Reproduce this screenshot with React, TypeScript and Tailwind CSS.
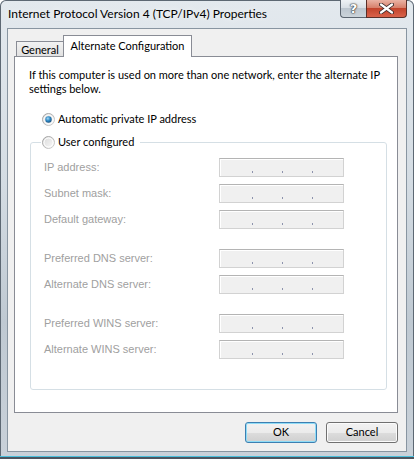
import type { ReactNode } from "react";

// Vista-style "TCP/IPv4 Properties" dialog, Alternate Configuration tab.
const title = "font-['Lato','Noto_Sans',sans-serif] text-[12px] whitespace-nowrap";
const ui = "font-['Lato','Noto_Sans',sans-serif] text-[11px] whitespace-nowrap";
const dlg = "font-['Liberation_Sans','DejaVu_Sans',sans-serif] text-[11px] whitespace-nowrap";

function Radio({ checked }: { checked?: boolean }) {
  return (
    <svg width="13" height="13" viewBox="0 0 13 13" className="shrink-0">
      <defs>
        <linearGradient id="rimg" x1="0" y1="0" x2="1" y2="1">
          <stop offset="0" stopColor="#9a9a9a" />
          <stop offset="1" stopColor="#d4d4d4" />
        </linearGradient>
        <radialGradient id="dot" cx="0.4" cy="0.35" r="0.7">
          <stop offset="0" stopColor="#a7d8f5" />
          <stop offset="0.5" stopColor="#2e8ac6" />
          <stop offset="1" stopColor="#1b4f7c" />
        </radialGradient>
        <linearGradient id="face" x1="0" y1="0" x2="1" y2="1">
          <stop offset="0" stopColor="#d8d8d8" />
          <stop offset="1" stopColor="#fbfbfb" />
        </linearGradient>
      </defs>
      <circle cx="6.5" cy="6.5" r="6" fill="url(#face)" stroke="url(#rimg)" />
      <circle cx="6.5" cy="6.5" r="4.5" fill="none" stroke="#ffffff" strokeWidth="1" />
      {checked && <circle cx="6.5" cy="6.5" r="3.2" fill="url(#dot)" />}
    </svg>
  );
}

function IpField() {
  return (
    <div className="relative h-[19px] w-[125px] border border-[#d2d2d2] border-t-[#b4b4b4] bg-[#f0f0f0] shadow-[inset_1px_1px_0_#ffffff]">
      <span className="absolute left-[32px] top-[12px] h-[2px] w-px bg-[#8d93ad]" />
      <span className="absolute left-[62px] top-[12px] h-[2px] w-px bg-[#8d93ad]" />
      <span className="absolute left-[92px] top-[12px] h-[2px] w-px bg-[#8d93ad]" />
    </div>
  );
}

function Row({ label }: { label: string }) {
  return (
    <div className="flex h-[19px] items-center">
      <span className={`${dlg} w-[175px] text-[#a0a0a0]`}>{label}</span>
      <IpField />
    </div>
  );
}

function Button({ children, primary }: { children: ReactNode; primary?: boolean }) {
  return (
    <div
      className={`${ui} flex h-[21px] w-[72px] items-center justify-center rounded-[3px] border text-black ${
        primary
          ? "border-[#3c7fb1] shadow-[inset_0_0_0_1px_#8fdcf7]"
          : "border-[#707070] shadow-[inset_0_0_0_1px_#fbfbfb]"
      } bg-[linear-gradient(#f2f2f2_0%,#ebebeb_50%,#dddddd_50%,#cfcfcf_100%)]`}
    >
      {children}
    </div>
  );
}

export default function App() {
  return (
    <div className="flex h-[459px] w-[414px] flex-col overflow-hidden rounded-t-[6px] bg-[linear-gradient(#e3e9ee,#d4dce3_40%,#bfc9d2_70%,#c9d1d9)] shadow-[inset_0_0_0_1px_#5d6873]">
      {/* title bar */}
      <div className="flex h-[28px] shrink-0 items-start">
        <div className={`${title} pl-[8px] pt-[6px] leading-[16px] text-black [text-shadow:0_0_6px_#ffffff]`}>
          Internet Protocol Version 4 (TCP/IPv4) Properties
        </div>
        <div className="ml-auto mr-[7px] flex h-[18px]">
          <div className="flex w-[26px] items-center justify-center rounded-bl-[4px] border border-t-0 border-r-0 border-[#5b6570] bg-[linear-gradient(#eef2f5,#d9e0e6_45%,#bcc6cf_50%,#cbd3da)]">
            <span className="font-['DejaVu_Sans',sans-serif] text-[13px] font-bold leading-none text-white [text-shadow:0_0_1px_#333,0_0_1px_#333,0_0_2px_#333]">
              ?
            </span>
          </div>
          <div className="flex w-[41px] items-center justify-center rounded-br-[4px] border border-t-0 border-[#5a2f28] bg-[linear-gradient(#eab3a4,#d7806b_45%,#c2442c_50%,#d9624a)]">
            <svg width="15" height="11" viewBox="0 0 15 11">
              <path d="M2 1.5 L13 9.5 M13 1.5 L2 9.5" stroke="#3b2a2a" strokeWidth="4" strokeLinecap="round" />
              <path d="M2 1.5 L13 9.5 M13 1.5 L2 9.5" stroke="#ffffff" strokeWidth="2.2" strokeLinecap="round" />
            </svg>
          </div>
        </div>
      </div>

      {/* client area */}
      <div className="mx-[7px] h-[424px] shrink-0 border border-[#8895a1] bg-[#f0f0f0] pl-[6px] pt-[6px]">
        <div className="w-[384px]">
          <div className="flex h-[21px] items-end pl-[2px]">
            <div className={`${ui} flex h-[15px] w-[47px] items-center justify-center border-l border-t border-[#898c95] bg-[linear-gradient(#f2f2f2,#e1e1e1)] pt-[2px] leading-[14px] text-black`}>
              General
            </div>
            <div className={`${ui} relative z-10 -mb-px flex h-[22px] w-[129px] items-start justify-center border-l border-r border-t border-[#898c95] bg-white pt-[2px] leading-[16px] text-black`}>
              Alternate Configuration
            </div>
          </div>

          <div className="h-[357px] border border-[#898c95] bg-white pl-[14px] pr-[10px] pt-[11px]">
            <p className={`${ui} leading-[14px] text-black`}>
              If this computer is used on more than one network, enter the alternate IP
              <br />
              settings below.
            </p>

            <div className={`${ui} ml-[13px] mt-[16px] flex h-[15px] items-center gap-[3px] text-black`}>
              <Radio checked />
              <span>Automatic private IP address</span>
            </div>

            <fieldset className="ml-[1px] mt-[8px] rounded-[3px] border border-[#d5dfe5] pb-[30px] pl-[10px] pr-0 pt-[8px]">
              <legend className={`${ui} flex h-[15px] items-center gap-[3px] pl-[1px] pr-[6px] text-black`}>
                <Radio />
                <span>User configured</span>
              </legend>
              <div className="ml-[3px] flex flex-col">
                <div className="flex flex-col gap-[7px]">
                  <Row label="IP address:" />
                  <Row label="Subnet mask:" />
                  <Row label="Default gateway:" />
                </div>
                <div className="mt-[20px] flex flex-col gap-[7px]">
                  <Row label="Preferred DNS server:" />
                  <Row label="Alternate DNS server:" />
                </div>
                <div className="mt-[20px] flex flex-col gap-[7px]">
                  <Row label="Preferred WINS server:" />
                  <Row label="Alternate WINS server:" />
                </div>
              </div>
            </fieldset>
          </div>

          <div className="mt-[9px] flex justify-end gap-[9px]">
            <Button primary>OK</Button>
            <Button>Cancel</Button>
          </div>
        </div>
      </div>

      {/* bottom frame edge */}
      <div className="mt-auto h-px bg-[#49bfdc]" />
      <div className="h-[2px] bg-[#4c5560]" />
    </div>
  );
}
